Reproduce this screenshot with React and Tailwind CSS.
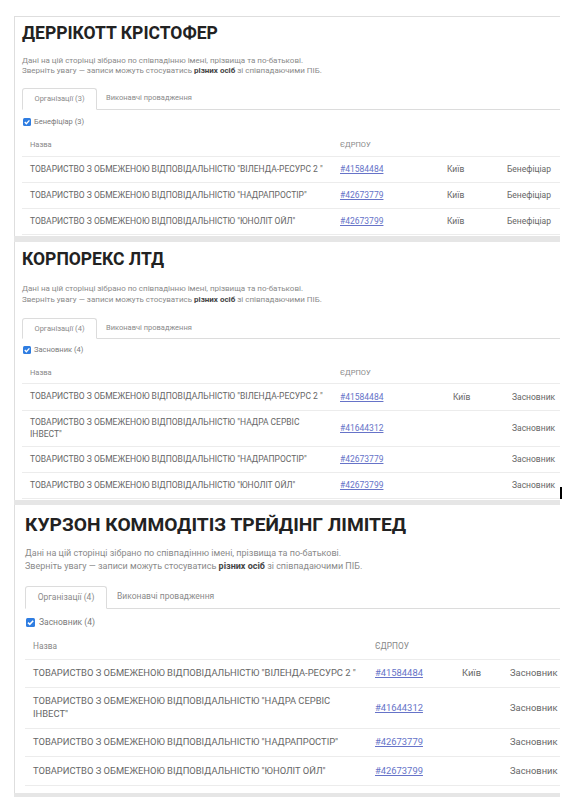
import React from 'react';

// ── Data ──────────────────────────────────────────────────────────────────────
const NAME = 'ТОВАРИСТВО З ОБМЕЖЕНОЮ ВІДПОВІДАЛЬНІСТЮ';

const PANELS = [
    {
        title: 'ДЕРРІКОТТ КРІСТОФЕР',
        tab: 'Організації (3)',
        check: 'Бенефіціар (3)',
        band: 'h-[6px]',
        rows: [
            { name: `${NAME} "ВІЛЕНДА-РЕСУРС 2 "`, code: '#41584484', city: 'Київ', role: 'Бенефіціар', h: 'h-[26px]' },
            { name: `${NAME} "НАДРАПРОСТІР"`, code: '#42673779', city: 'Київ', role: 'Бенефіціар', h: 'h-[26px]' },
            { name: `${NAME} "ЮНОЛІТ ОЙЛ"`, code: '#42673799', city: 'Київ', role: 'Бенефіціар', h: 'h-[26px]' },
        ],
        s: {
            wrap: 'border-t border-l pl-[7px] pt-[5px] pb-[1px]',
            title: 'text-[17.5px] leading-[23px]',
            desc: 'mt-[11px] text-[8px] leading-[10px]',
            tabs: 'mt-[11px] h-[23px]',
            tab1: 'w-[75px] text-[7.5px]',
            tab2: 'pl-[9px] text-[7.5px]',
            checkRow: 'mt-[7px] h-[10px] text-[7.5px] gap-[3px] pl-[1px]',
            box: 'w-[8px] h-[8px]',
            table: 'mt-[6px] text-[8.5px]',
            head: 'h-[24px] text-[7.5px]',
            cols: ['w-[310px] pl-[8px]', 'w-[107px] pl-[8px]', 'w-[60px] pl-[8px]', 'pl-[8px]'],
        },
    },
    {
        title: 'КОРПОРЕКС ЛТД',
        tab: 'Організації (4)',
        check: 'Засновник (4)',
        band: 'h-[5px]',
        cursor: true,
        rows: [
            { name: `${NAME} "ВІЛЕНДА-РЕСУРС 2 "`, code: '#41584484', city: 'Київ', role: 'Засновник', h: 'h-[27px]' },
            { name: `${NAME} "НАДРА СЕРВІС ІНВЕСТ"`, code: '#41644312', city: '', role: 'Засновник', h: 'h-[36px]' },
            { name: `${NAME} "НАДРАПРОСТІР"`, code: '#42673779', city: '', role: 'Засновник', h: 'h-[26px]' },
            { name: `${NAME} "ЮНОЛІТ ОЙЛ"`, code: '#42673799', city: '', role: 'Засновник', h: 'h-[26px]' },
        ],
        s: {
            wrap: 'border-l pl-[7px] pt-[6px] pb-[1px]',
            title: 'text-[17.5px] leading-[22px]',
            desc: 'mt-[13px] text-[8px] leading-[11px]',
            tabs: 'mt-[12px] h-[22px]',
            tab1: 'w-[75px] text-[7.5px]',
            tab2: 'pl-[9px] text-[7.5px]',
            checkRow: 'mt-[6px] h-[10px] text-[7.5px] gap-[3px] pl-[1px]',
            box: 'w-[8px] h-[8px]',
            table: 'mt-[7px] text-[8.5px]',
            head: 'h-[22px] text-[7.5px]',
            cols: ['w-[310px] pl-[8px]', 'w-[113px] pl-[8px]', 'w-[59px] pl-[8px]', 'pl-[8px]'],
        },
    },
    {
        title: 'КУРЗОН КОММОДІТІЗ ТРЕЙДІНГ ЛІМІТЕД',
        tab: 'Організації (4)',
        check: 'Засновник (4)',
        band: 'h-[4px]',
        trail: true,
        rows: [
            { name: `${NAME} "ВІЛЕНДА-РЕСУРС 2 "`, code: '#41584484', city: 'Київ', role: 'Засновник', h: 'h-[28px]' },
            { name: `${NAME} "НАДРА СЕРВІС ІНВЕСТ"`, code: '#41644312', city: '', role: 'Засновник', h: 'h-[41px]' },
            { name: `${NAME} "НАДРАПРОСТІР"`, code: '#42673779', city: '', role: 'Засновник', h: 'h-[28px]' },
            { name: `${NAME} "ЮНОЛІТ ОЙЛ"`, code: '#42673799', city: '', role: 'Засновник', h: 'h-[29px]' },
        ],
        s: {
            wrap: 'border-l pl-[10px] pt-[7px] pb-[7px]',
            title: 'text-[19.2px] leading-[25px]',
            desc: 'mt-[10px] text-[9px] leading-[13px]',
            tabs: 'mt-[12px] h-[24px]',
            tab1: 'w-[82px] text-[8.5px]',
            tab2: 'pl-[10px] text-[8.5px]',
            checkRow: 'mt-[8px] h-[10px] text-[8.5px] gap-[4px] pl-[1px]',
            box: 'w-[9px] h-[9px]',
            table: 'mt-[7px] text-[9.4px]',
            head: 'h-[26px] text-[8.3px]',
            cols: ['w-[342px] pl-[8px]', 'w-[87px] pl-[8px]', 'w-[48px] pl-[8px]', 'pl-[8px]'],
        },
    },
];

// ── Checkbox ──────────────────────────────────────────────────────────────────
const Checked = ({ size }) => (
    <span className={`${size} inline-flex shrink-0 items-center justify-center rounded-[1.5px] bg-[#2f7de1]`}>
        <svg viewBox="0 0 10 10" className="w-full h-full">
            <path d="M2.2 5.1 L4.2 7.1 L8 3" fill="none" stroke="#fff" strokeWidth="1.7" />
        </svg>
    </span>
);

// ── Panel ─────────────────────────────────────────────────────────────────────
const Panel = ({ p }) => {
    const s = p.s;
    return (
        <>
            <div className={`relative w-[546px] overflow-hidden border-[#dedede] bg-white ${s.wrap}`}>
                <h1 className={`font-bold text-[#222] ${s.title}`}>{p.title}</h1>

                <div className={`text-[#8a8a8a] ${s.desc}`}>
                    <p>Дані на цій сторінці зібрано по співпадінню імені, прізвища та по-батькові.</p>
                    <p>
                        Зверніть увагу — записи можуть стосуватись <b className="font-bold text-[#444]">різних осіб</b> зі
                        співпадаючими ПІБ.
                    </p>
                </div>

                {/* Tabs */}
                <div className={`flex items-end border-b border-[#dcdcdc] ${s.tabs}`}>
                    <div className={`-mb-px h-full flex items-center justify-center rounded-t-[3px] border border-[#dcdcdc] border-b-white bg-white text-[#8a8a8a] ${s.tab1}`}>
                        {p.tab}
                    </div>
                    <div className={`h-full flex items-center text-[#8a8a8a] ${s.tab2}`}>Виконавчі провадження</div>
                </div>

                <div className={`flex items-center text-[#7a7a7a] ${s.checkRow}`}>
                    <Checked size={s.box} />
                    <span>{p.check}</span>
                </div>

                {/* Table */}
                <div className={`text-[#666] ${s.table}`}>
                    <div className={`flex items-center border-b border-[#ececec] text-[#888] ${s.head}`}>
                        <div className={`shrink-0 ${s.cols[0]}`}>Назва</div>
                        <div className={`shrink-0 ${s.cols[1]}`}>ЄДРПОУ</div>
                    </div>
                    {p.rows.map((r) => (
                        <div key={r.code} className={`flex items-center border-b border-[#ececec] whitespace-nowrap ${r.h}`}>
                            <div className={`shrink-0 whitespace-normal leading-[1.35] ${s.cols[0]}`}>{r.name}</div>
                            <div className={`shrink-0 ${s.cols[1]}`}>
                                <span className="text-[#6673c8] underline">{r.code}</span>
                            </div>
                            <div className={`shrink-0 ${s.cols[2]}`}>{r.city}</div>
                            <div className={`shrink-0 flex items-center ${s.cols[3]}`}>
                                {r.role}
                                {p.trail && <span className="ml-[2px] h-[4px] w-[2px] bg-[#bbb]" />}
                            </div>
                        </div>
                    ))}
                </div>
            </div>
            {p.cursor && (
                <div className="relative w-[546px]">
                    <span className="absolute right-[-2px] bottom-[1px] h-[12px] w-[2px] bg-black" />
                </div>
            )}
            <div className={`w-[546px] bg-[#e6e6e6] ${p.band}`} />
        </>
    );
};

export default function App() {
    return (
        <div className="w-[585px] h-[800px] overflow-hidden bg-white pt-[16px] pl-[14px] font-['Roboto',sans-serif]">
            {PANELS.map((p) => (
                <Panel key={p.title} p={p} />
            ))}
        </div>
    );
}
